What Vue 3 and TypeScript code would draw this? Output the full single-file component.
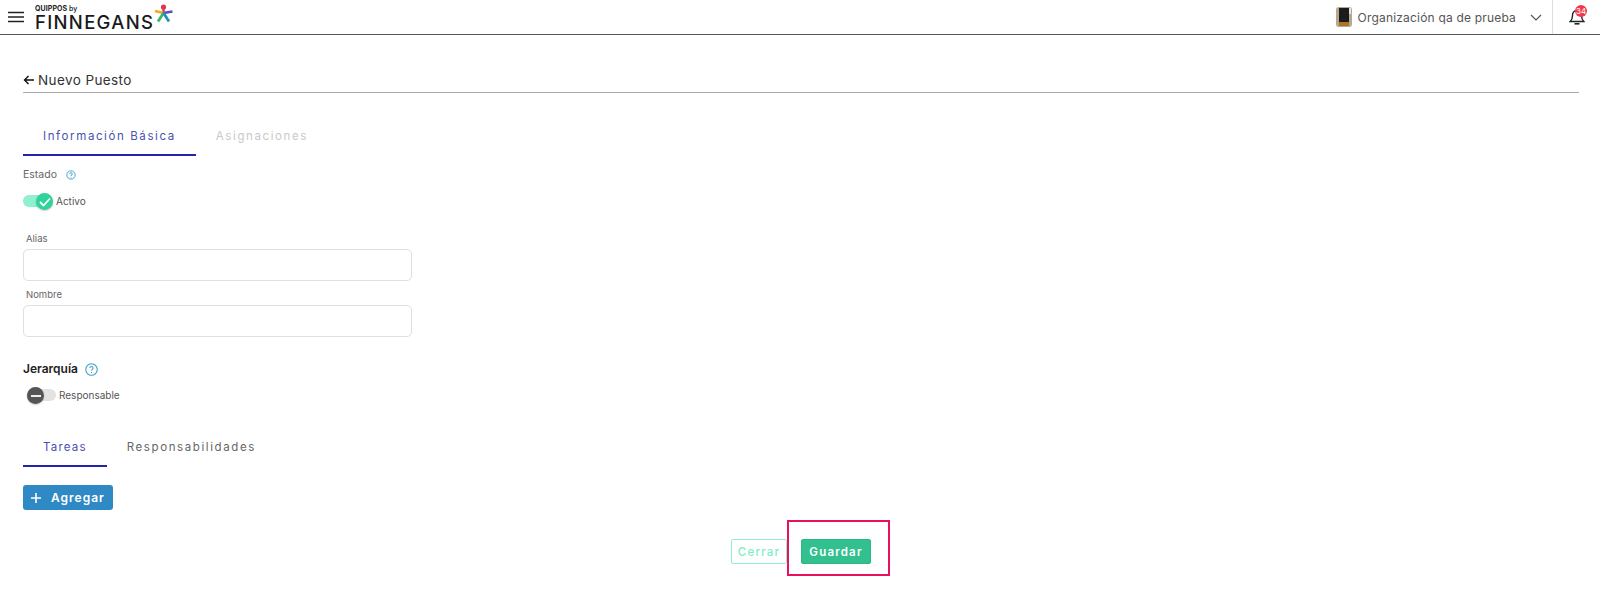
<script setup lang="ts">
const mainTabs = [
  { label: 'Información Básica', active: true },
  { label: 'Asignaciones', active: false },
]
const subTabs = [
  { label: 'Tareas', active: true },
  { label: 'Responsabilidades', active: false },
]
const fields = ['Alias', 'Nombre']
</script>

<template>
  <div class="page">
    <header class="topbar">
      <div class="brand">
        <svg class="burger" width="16" height="12" viewBox="0 0 16 12">
          <path d="M0 1.5h16M0 6h16M0 10.5h16" stroke="#222" stroke-width="1.5" fill="none" />
        </svg>
        <div class="logo">
          <span class="logo-small">QUIPPOS <i>by</i></span>
          <span class="logo-big">FINNEGANS</span>
        </div>
        <svg class="star" width="20" height="20" viewBox="0 0 20 20">
          <path d="M9.5 9V3" stroke="#e5344b" stroke-width="2.4" />
          <circle cx="9.5" cy="3" r="2.6" fill="#e5344b" />
          <path d="M9.5 9 1 7" stroke="#f6a623" stroke-width="2.6" />
          <path d="M9.500 9 18.500 7.500" stroke="#5b4fc0" stroke-width="2.600" />
          <path d="M9.500 9 4 17.500" stroke="#35b86b" stroke-width="2.800" />
          <path d="M9.500 9 15 17.500" stroke="#1f93b8" stroke-width="2.800" />
        </svg>
      </div>
      <div class="top-right">
        <svg class="org-icon" width="16" height="20" viewBox="0 0 16 20">
          <rect width="16" height="20" rx="3" fill="#b5a88f" />
          <rect x="3" y="1" width="10" height="14" fill="#1c1c1c" />
          <rect x="3" y="15" width="10" height="4" fill="#a9742c" />
          <rect x="13" y="1" width="2" height="6" fill="#e4e4e4" />
        </svg>
        <span class="org-name">Organización qa de prueba</span>
        <svg class="chev" width="12" height="7" viewBox="0 0 12 7">
          <path d="M1 1l5 5 5-5" stroke="#555" stroke-width="1.2" fill="none" />
        </svg>
        <div class="bell-cell">
          <svg width="16" height="18" viewBox="0 0 16 18">
            <path d="M8 2.500c-3 0-4.500 2.300-4.500 5 0 3-.8 4.600-2.300 6h13.600c-1.500-1.400-2.300-3-2.300-6 0-2.700-1.500-5-4.500-5z" stroke="#222" stroke-width="1.400" fill="none" />
            <path d="M5.500 15.800h5" stroke="#222" stroke-width="1.600" />
          </svg>
          <span class="badge">34</span>
        </div>
      </div>
    </header>

    <main class="content">
      <h1 class="title">
        <svg class="arrow" width="11" height="10" viewBox="0 0 11 10">
          <path d="M11 5H1.500M5.500 1 1.500 5l4 4" stroke="#111" stroke-width="1.400" fill="none" />
        </svg>
        Nuevo Puesto
      </h1>

      <nav class="tabs main-tabs">
        <span v-for="t in mainTabs" :key="t.label" class="tab" :class="{ active: t.active, muted: !t.active }">{{ t.label }}</span>
      </nav>

      <div class="state-label">
        Estado
        <svg width="10" height="10" viewBox="0 0 12 12" class="help">
          <circle cx="6" cy="6" r="5" fill="none" stroke="#3aa0c8" stroke-width="1.100" />
          <path d="M4.500 4.700c0-2 3-2 3 0 0 1.200-1.500 1.200-1.500 2.500M6 8.300v1" stroke="#3aa0c8" stroke-width="1.100" fill="none" />
        </svg>
      </div>
      <div class="toggle-row on">
        <span class="track"></span>
        <span class="knob">
          <svg width="12" height="10" viewBox="0 0 12 10"><path d="M1 5l3.500 3.500L11 1.500" stroke="#fff" stroke-width="1.800" fill="none" /></svg>
        </span>
        <span class="toggle-text">Activo</span>
      </div>

      <div class="fields">
        <div v-for="f in fields" :key="f" class="field">
          <label>{{ f }}</label>
          <div class="input"></div>
        </div>
      </div>

      <div class="section-head">
        Jerarquía
        <svg width="13" height="13" viewBox="0 0 12 12" class="help">
          <circle cx="6" cy="6" r="5.300" fill="none" stroke="#3aa0c8" stroke-width="1" />
          <path d="M4.500 4.700c0-2 3-2 3 0 0 1.200-1.500 1.200-1.500 2.500M6 8.300v1" stroke="#3aa0c8" stroke-width="1" fill="none" />
        </svg>
      </div>
      <div class="toggle-row off">
        <span class="track"></span>
        <span class="knob"><i class="dash"></i></span>
        <span class="toggle-text">Responsable</span>
      </div>

      <nav class="tabs sub-tabs">
        <span v-for="t in subTabs" :key="t.label" class="tab" :class="{ active: t.active }">{{ t.label }}</span>
      </nav>

      <button class="add" type="button">
        <svg width="10" height="10" viewBox="0 0 10 10"><path d="M5 0v10M0 5h10" stroke="#fff" stroke-width="1.600" /></svg>
        Agregar
      </button>

      <footer class="actions">
        <button class="btn close" type="button">Cerrar</button>
        <div class="highlight-wrap">
          <button class="btn save" type="button">Guardar</button>
          <span class="highlight"></span>
        </div>
      </footer>
    </main>
  </div>
</template>

<style>
html, body { background: #fff; }
</style>

<style scoped>
.page { width: 1600px; height: 591px; overflow: hidden; font-family: Inter, "Open Sans", sans-serif; color: #333; }
.topbar { height: 34px; border-bottom: 1px solid #55555f; display: flex; justify-content: space-between; align-items: center; }
.brand { display: flex; align-items: center; height: 34px; padding-left: 8px; }
.burger { margin-right: 11px; }
.logo { display: flex; flex-direction: column; line-height: 1; margin-top: 3px; }
.logo-small { font-size: 7px; font-weight: 700; color: #222; letter-spacing: 0.100px; }
.logo-small i { font-style: normal; font-weight: 500; }
.logo-big { font-size: 18.500px; font-weight: 500; color: #1a1a1a; letter-spacing: 1.300px; margin-top: 1px; }
.star { align-self: flex-start; margin: 4px 0 0 0; }
.top-right { display: flex; align-items: center; height: 34px; }
.org-name { font-size: 12px; color: #555; margin-left: 6px; letter-spacing: 0.190px; }
.chev { margin: 0 10px 0 14px; }
.bell-cell { position: relative; width: 47px; height: 34px; border-left: 1px solid #ddd; display: flex; align-items: center; justify-content: center; }
.badge { position: absolute; top: 5px; left: 22px; width: 12px; height: 12px; border-radius: 50%; background: #ee3b4c; color: #fff; font-size: 8px; line-height: 12px; text-align: center; }
.content { padding: 0 21px 0 23px; display: flex; flex-direction: column; align-items: flex-start; }
.title { align-self: stretch; margin: 36px 0 0; font-size: 13.500px; font-weight: 400; color: #333; height: 18px; padding-bottom: 3px; line-height: 18px; border-bottom: 1px solid #aaa; letter-spacing: 0.400px; display: flex; align-items: center; gap: 4px; }
.arrow { flex: none; }
.tabs { display: flex; }
.tab { font-size: 11.500px; letter-spacing: 1.600px; color: #666; padding: 0 20px; height: 20px; }
.tab.active { color: #4a50b0; border-bottom: 2px solid #2222aa; }
.tab.muted { color: #c8c8cc; }
.main-tabs { margin-top: 35px; }
.main-tabs .tab { height: 26px; line-height: 17px; }
.state-label { margin-top: 12px; font-size: 10.500px; line-height: 14px; color: #666; display: flex; align-items: center; gap: 9px; }
.toggle-row { position: relative; display: flex; align-items: center; height: 18px; margin-top: 10px; }
.track { width: 30px; height: 12px; border-radius: 6px; }
.on .track { background: #8ef0cc; }
.knob { position: absolute; top: 1px; width: 17px; height: 17px; border-radius: 50%; display: flex; align-items: center; justify-content: center; box-shadow: 0 1px 2px rgba(0,0,0,.2); }
.on .knob { left: 13px; background: #2fd39b; }
.toggle-text { font-size: 10px; color: #555; }
.on .toggle-text { margin-left: 3px; }
.fields { align-self: stretch; margin-top: 22px; display: flex; flex-direction: column; gap: 7px; }
.field label { display: block; font-size: 9.500px; line-height: 13px; color: #666; padding-left: 3px; margin-bottom: 4px; }
.input { width: 389px; height: 32px; box-sizing: border-box; border: 1px solid #dfe0e6; border-radius: 5px; }
.section-head { margin-top: 25px; font-size: 12px; font-weight: 600; color: #222; line-height: 14px; display: flex; align-items: center; gap: 7px; }
.off { margin: 10px 0 0 4px; }
.off .track { background: #e2e2e2; width: 29px; }
.off .knob { left: 0; background: #555; }
.dash { width: 10px; height: 2px; background: #eee; }
.off .toggle-text { margin-left: 3px; }
.sub-tabs { margin-top: 35px; }
.sub-tabs .tab { height: 26px; line-height: 17px; letter-spacing: 1.600px; }
.sub-tabs .tab.active { letter-spacing: 1.200px; }
.add { margin-top: 18px; height: 25px; width: 90px; background: #2f89c5; border: 0; border-radius: 3px; color: #fff; font: 600 12px Inter, sans-serif; letter-spacing: 1px; padding: 0 0 0 8px; display: flex; align-items: center; gap: 10px; }
.actions { align-self: center; margin-top: 29px; display: flex; gap: 14px; }
.btn { height: 25px; border-radius: 2px; font: 500 11.500px Inter, sans-serif; letter-spacing: 1.200px; padding: 0; }
.close { width: 56px; background: #fff; border: 1px solid #8ef0cc; color: #7eeec4; }
.save { width: 70px; background: #33c08f; border: 1px solid #2fb587; color: #fff; display: block; font-weight: 600; }
.highlight-wrap { position: relative; }
.highlight { position: absolute; inset: -19px -19px -12px -14px; border: 2px solid #e8105f; pointer-events: none; }
</style>
